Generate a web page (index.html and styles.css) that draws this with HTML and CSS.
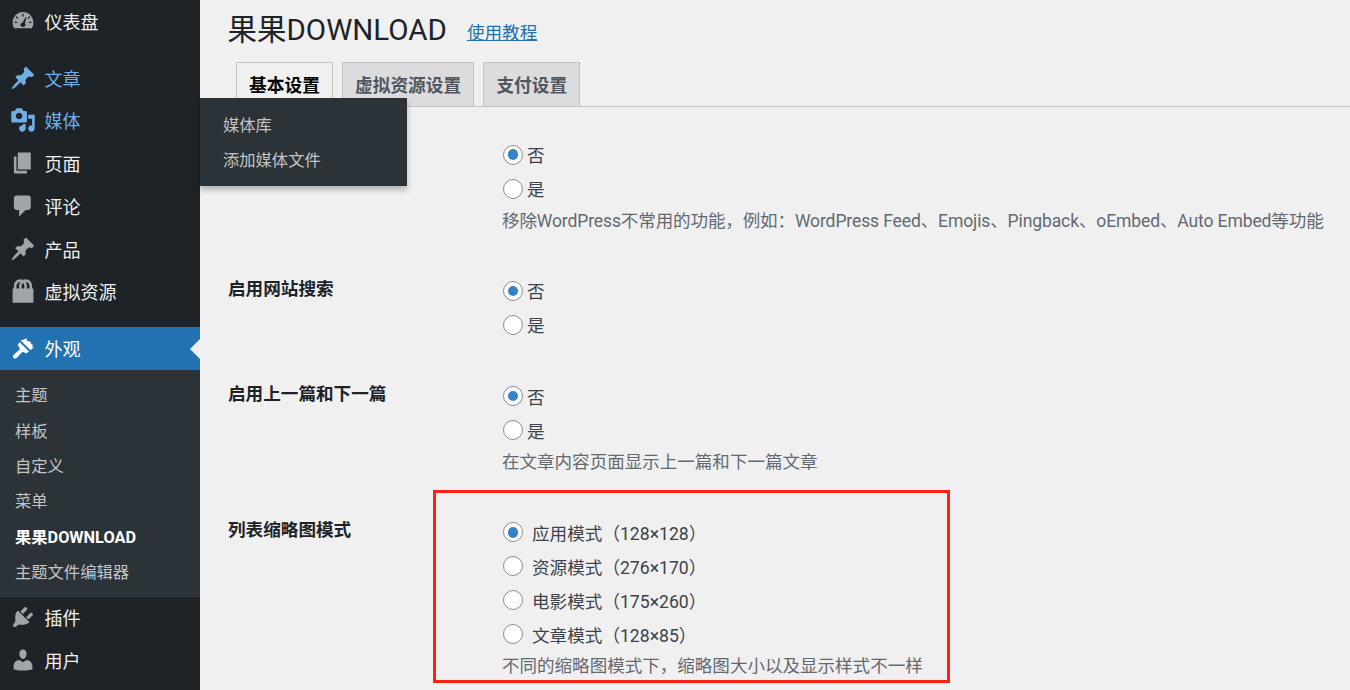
FILE: index.html
```html
<!DOCTYPE html>
<html lang="zh-CN">
<head>
    <meta charset="UTF-8">
    <meta name="viewport" content="width=device-width, initial-scale=1.0">
    <title>果果DOWNLOAD</title>
    <link rel="stylesheet" href="styles.css">
</head>
<body>
    <div class="wrap">
        <aside class="sidebar">
            <ul class="menu">
                <li class="menu-item">
                    <svg class="icon" viewBox="0 0 20 20"><path fill-rule="evenodd" d="M3.2 15.500C2.400 14.200 2 12.700 2 11.100 2 6.600 5.600 3 10 3s8 3.600 8 8.100c0 1.600-.4 3.100-1.200 4.400H3.200zM9.500 4.500v2h1v-2h-1zM5 6.300l-.7.7 1.400 1.400.7-.7L5 6.300zm10 0L13.600 7.700l.7.7L15.700 7l-.7-.7zM3.500 10.600v1h2v-1h-2zm11 0v1h2v-1h-2zM12.300 7l-2.800 4.300c-.9.100-1.500.7-1.500 1.600 0 .9.800 1.700 2 1.700s2-.8 2-1.700c0-.5-.2-.9-.5-1.200L12.800 7.300 12.300 7z"/></svg>
                    <span>仪表盘</span>
                </li>
                <li class="menu-sep"></li>
                <li class="menu-item is-hover">
                    <svg class="icon" viewBox="0 0 20 20"><path d="M10.440 3.020l1.820-1.820 6.360 6.350-1.830 1.820c-1.050-.68-2.480-.57-3.410.36l-.75.75c-.92.930-1.040 2.350-.35 3.410l-1.830 1.820-2.410-2.410-2.800 2.790c-.42.420-3.380 2.710-3.800 2.290s1.860-3.390 2.280-3.810l2.790-2.790L4.100 9.360l1.830-1.820c1.050.690 2.480.570 3.400-.36l.750-.75c.930-.920 1.050-2.350.360-3.410z"/></svg>
                    <span>文章</span>
                </li>
                <li class="menu-item is-hover">
                    <svg class="icon" viewBox="0 0 20 20"><path fill-rule="evenodd" d="M13 11V4c0-.55-.45-1-1-1h-1.670L9 1H5L3.670 3H2c-.55 0-1 .45-1 1v7c0 .55.45 1 1 1h10c.55 0 1-.45 1-1zM7 4.500c1.380 0 2.500 1.120 2.500 2.500S8.380 9.500 7 9.500 4.500 8.380 4.500 7 5.620 4.500 7 4.500zM14 6h5v10.500c0 1.380-1.120 2.500-2.500 2.500S14 17.880 14 16.500s1.120-2.500 2.500-2.500c.17 0 .34.020.5.050V9h-3V6zm-4 8.050V13h2v3.500c0 1.380-1.120 2.500-2.500 2.500S7 17.880 7 16.500 8.120 14 9.500 14c.17 0 .34.020.5.050z"/></svg>
                    <span>媒体</span>
                </li>
                <li class="menu-item">
                    <svg class="icon" viewBox="0 0 20 20"><path d="M6 15V2h10v13H6zm-1 1h8v2H3V5h2v11z"/></svg>
                    <span>页面</span>
                </li>
                <li class="menu-item">
                    <svg class="icon" viewBox="0 0 20 20"><path d="M5 2h9c1.100 0 2 .9 2 2v7c0 1.100-.9 2-2 2h-2l-5 5v-5H5c-1.100 0-2-.9-2-2V4c0-1.100.9-2 2-2z"/></svg>
                    <span>评论</span>
                </li>
                <li class="menu-item">
                    <svg class="icon" viewBox="0 0 20 20"><path d="M10.440 3.020l1.820-1.820 6.360 6.350-1.830 1.820c-1.050-.68-2.480-.57-3.410.36l-.75.75c-.92.930-1.040 2.350-.35 3.410l-1.830 1.820-2.410-2.410-2.800 2.790c-.42.420-3.380 2.710-3.800 2.290s1.860-3.390 2.280-3.810l2.790-2.790L4.100 9.360l1.830-1.820c1.050.690 2.480.570 3.400-.36l.750-.75c.930-.920 1.050-2.350.360-3.410z"/></svg>
                    <span>产品</span>
                </li>
                <li class="menu-item">
                    <svg class="icon" viewBox="0 0 20 20"><path fill-rule="evenodd" d="M17 8h1v11H2V8h1V6c0-2.760 2.240-5 5-5 .71 0 1.390.15 2 .42.61-.27 1.290-.42 2-.42 2.760 0 5 2.240 5 5v2zM5 6v2h2V6c0-1.130.39-2.160 1.020-3H8C6.350 3 5 4.350 5 6zm10 2V6c0-1.650-1.350-3-3-3h-.02c.63.84 1.020 1.870 1.020 3v2h2zm-5-4.220C9.390 4.330 9 5.120 9 6v2h2V6c0-.88-.39-1.670-1-2.220z"/></svg>
                    <span>虚拟资源</span>
                </li>
                <li class="menu-sep"></li>
                <li class="menu-item is-current">
                    <svg class="icon" viewBox="0 0 20 20"><path d="M8.200 4.200l7.600 7.500c.8-1 2.100-1.700 2.900-2.200-1.200-.2-1.700-.6-1.900-1.300.5-.1 1-.3 1.300-.6-1-.1-1.900-.6-2.300-1.400.3-.2.500-.5.600-.8-1.200.1-2.200-.3-2.700-1.100-.1.300-.4.500-.7.600-.2-.8-.3-1.600.1-2.400C11.200 3.200 9.500 3.700 8.200 4.200zM7.300 5.300l7.300 7.300-2.100 1.700-2.700-1.500c-.4.100-.7.400-1 .8l-3.300 3.700c-.8 1-2 1.200-2.800.4-.8-.8-.6-1.900.3-2.700l3.800-3.200c.5-.4.800-.8.800-1.200L6 7.700l1.300-2.400z"/></svg>
                    <span>外观</span>
                </li>
                <li class="submenu">
                    <a>主题</a>
                    <a>样板</a>
                    <a>自定义</a>
                    <a>菜单</a>
                    <a class="current">果果DOWNLOAD</a>
                    <a>主题文件编辑器</a>
                </li>
                <li class="menu-item">
                    <svg class="icon" viewBox="0 0 20 20"><path d="M13.110 4.360L9.870 7.600 8 5.730l3.240-3.240c.35-.34 1.050-.2 1.560.32.52.51.66 1.210.31 1.550zm-8 1.770l.91-1.120 9.010 9.010-1.190.84c-.71.710-2.630 1.160-3.820 1.160H6.140L4.900 17.260c-.59.590-1.540.590-2.120 0-.59-.58-.59-1.530 0-2.120l1.240-1.240v-3.880c0-1.130.4-3.190 1.090-3.890zm7.260 3.970l3.240-3.240c.34-.35 1.040-.21 1.550.31.52.51.66 1.210.31 1.550l-3.240 3.250z"/></svg>
                    <span>插件</span>
                </li>
                <li class="menu-item">
                    <svg class="icon" viewBox="0 0 20 20"><path d="M10 9.250c-2.270 0-2.730-3.440-2.730-3.440C7 4.020 7.820 2 9.970 2c2.160 0 2.980 2.020 2.710 3.810 0 0-.41 3.440-2.680 3.440zm0 2.570L12.720 10c2.390 0 4.520 2.330 4.520 4.530v2.490s-3.650 1.130-7.240 1.130c-3.650 0-7.240-1.130-7.240-1.130v-2.490c0-2.250 1.940-4.480 4.470-4.480z"/></svg>
                    <span>用户</span>
                </li>
            </ul>
            <div class="flyout">
                <a>媒体库</a>
                <a>添加媒体文件</a>
            </div>
        </aside>

        <main class="content">
            <div class="page-head">
                <h1>果果DOWNLOAD</h1>
                <a class="help-link" href="#">使用教程</a>
            </div>
            <nav class="tabs">
                <a class="tab active">基本设置</a>
                <a class="tab">虚拟资源设置</a>
                <a class="tab">支付设置</a>
            </nav>

            <section class="field">
                <div class="field-label"></div>
                <div class="field-body">
                    <label class="radio"><input type="radio" name="clean" checked>否</label>
                    <label class="radio"><input type="radio" name="clean">是</label>
                    <p class="desc desc-tight">移除WordPress不常用的功能，例如：WordPress Feed、Emojis、Pingback、oEmbed、Auto Embed等功能</p>
                </div>
            </section>

            <section class="field">
                <div class="field-label">启用网站搜索</div>
                <div class="field-body">
                    <label class="radio"><input type="radio" name="search" checked>否</label>
                    <label class="radio"><input type="radio" name="search">是</label>
                </div>
            </section>

            <section class="field">
                <div class="field-label">启用上一篇和下一篇</div>
                <div class="field-body">
                    <label class="radio"><input type="radio" name="prevnext" checked>否</label>
                    <label class="radio"><input type="radio" name="prevnext">是</label>
                    <p class="desc">在文章内容页面显示上一篇和下一篇文章</p>
                </div>
            </section>

            <section class="field field-marked">
                <div class="field-label">列表缩略图模式</div>
                <div class="field-body">
                    <label class="radio wide"><input type="radio" name="thumb" checked>应用模式（128×128）</label>
                    <label class="radio wide"><input type="radio" name="thumb">资源模式（276×170）</label>
                    <label class="radio wide"><input type="radio" name="thumb">电影模式（175×260）</label>
                    <label class="radio wide"><input type="radio" name="thumb">文章模式（128×85）</label>
                    <p class="desc">不同的缩略图模式下，缩略图大小以及显示样式不一样</p>
                </div>
                <div class="red-box"></div>
            </section>
        </main>
    </div>
</body>
</html>
```

FILE: styles.css
```css
* {
    box-sizing: border-box;
}

html, body {
    height: 100%;
}

body {
    margin: 0;
    overflow: hidden;
    background: #f0f0f1;
    color: #3c434a;
    font-family: Roboto, "Noto Sans CJK SC", sans-serif;
    font-size: 17.6px;
}

.wrap {
    display: flex;
    height: 690px;
    overflow: hidden;
}

/* sidebar */
.sidebar {
    position: relative;
    flex: 0 0 200px;
    background: #1d2327;
    color: #f0f0f1;
}

.menu {
    list-style: none;
    margin: 0;
    padding: 0;
}

.menu-item {
    display: flex;
    align-items: center;
    gap: 8.5px;
    height: 42.75px;
    padding-left: 10px;
    padding-bottom: 1px;
    font-size: 18px;
}

.menu-item .icon {
    flex: 0 0 26px;
    width: 26px;
    height: 26px;
    fill: #a0a5aa;
}

.menu-sep {
    height: 14px;
}

.menu-item.is-hover {
    color: #72aee6;
}

.menu-item.is-hover .icon {
    fill: #72aee6;
}

.menu-item.is-current {
    position: relative;
    height: 43px;
    background: #2271b1;
    color: #fff;
}

.menu-item.is-current .icon {
    fill: #fff;
}

.menu-item.is-current::after {
    content: "";
    position: absolute;
    right: 0;
    top: 50%;
    margin-top: -10px;
    border: 10px solid transparent;
    border-right-color: #f0f0f1;
    border-left-width: 0;
}

.submenu {
    display: flex;
    flex-direction: column;
    padding: 8px 0 6px;
    background: #2c3338;
}

.submenu a {
    height: 35.4px;
    line-height: 35.4px;
    padding-left: 15px;
    color: #c3c4c7;
    font-size: 16.3px;
}

.submenu a.current {
    color: #fff;
    font-weight: 700;
}

.flyout {
    position: absolute;
    left: 200px;
    top: 98px;
    z-index: 5;
    display: flex;
    flex-direction: column;
    width: 207px;
    height: 88px;
    padding: 10px 0;
    background: #2c3338;
    box-shadow: 0 4px 6px rgba(0, 0, 0, 0.25);
}

.flyout a {
    height: 35px;
    line-height: 35px;
    padding-left: 23px;
    color: #c3c4c7;
    font-size: 16.3px;
}

/* main */
.content {
    flex: 1;
    min-width: 0;
    padding-left: 28px;
}

.page-head {
    display: flex;
    align-items: center;
    gap: 20px;
    height: 62px;
}

.page-head h1 {
    margin: 0 0 8px -0.5px;
    color: #1d2327;
    font-size: 29.5px;
    font-weight: 400;
}

.help-link {
    color: #2271b1;
    font-size: 17.6px;
}

.tabs {
    display: flex;
    gap: 9px;
    height: 45px;
    padding-left: 8px;
    border-bottom: 1px solid #c3c4c7;
}

.tab {
    height: 45px;
    padding: 0 12.100px;
    line-height: 46px;
    border: 1px solid #c3c4c7;
    background: #dcdcde;
    color: #50575e;
    font-size: 17.7px;
    font-weight: 700;
}

.tab.active {
    border-bottom-color: #f0f0f1;
    background: #f0f0f1;
    color: #000;
}

.field {
    position: relative;
    display: flex;
    padding: 19px 0 18.330px;
}

.tabs + .field {
    margin-top: 11.500px;
}

.field-label {
    flex: 0 0 275px;
    color: #1d2327;
    font-weight: 700;
    line-height: 30px;
}

.field-body {
    flex: 1;
    min-width: 0;
}

.radio {
    display: flex;
    align-items: center;
    height: 34px;
}

.radio input {
    appearance: none;
    display: flex;
    align-items: center;
    justify-content: center;
    flex: 0 0 20px;
    width: 20px;
    height: 20px;
    margin: 0 4px 0 0;
    border: 1px solid #8c8f94;
    border-radius: 50%;
    background: #fff;
}

.radio.wide input {
    margin-right: 9px;
}

.radio input:checked::before {
    content: "";
    width: 10.500px;
    height: 10.500px;
    border-radius: 50%;
    background: #3582c4;
}

.desc {
    margin: 0 0 0 -1px;
    height: 31px;
    line-height: 31px;
    color: #646970;
    font-size: 17.55px;
    white-space: nowrap;
}

.desc-tight {
    letter-spacing: -0.125px;
}

/* annotation from the screenshot */
.red-box {
    position: absolute;
    left: 205px;
    top: -6.500px;
    width: 517px;
    height: 193px;
    border: 3px solid #ff2016;
}
```
